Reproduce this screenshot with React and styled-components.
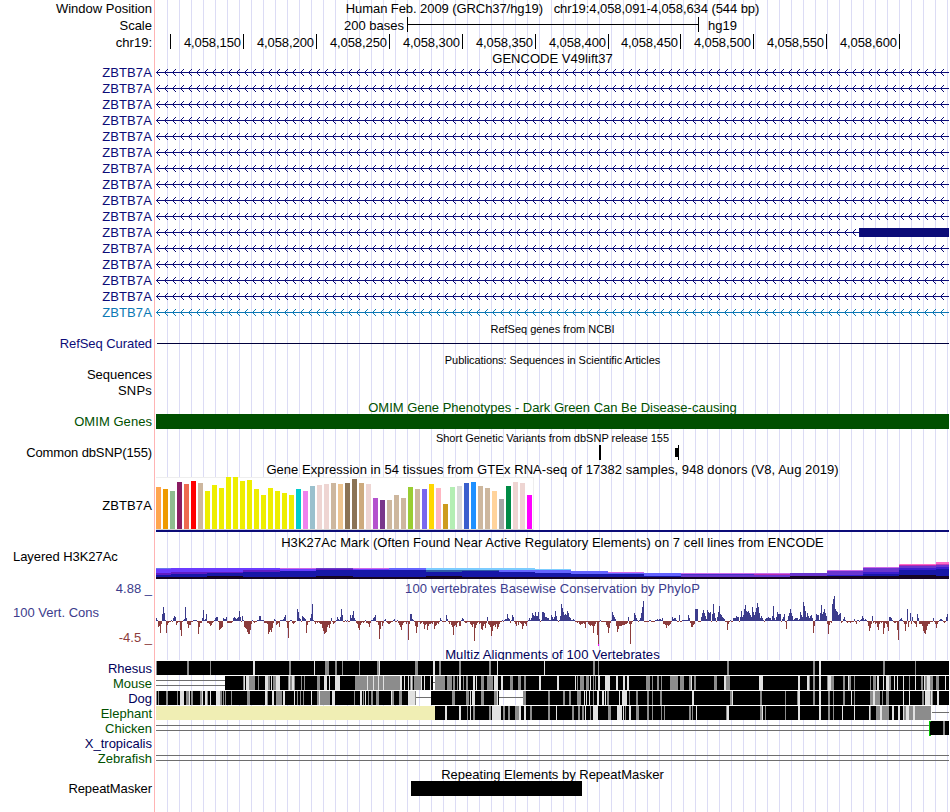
import React from "react";
import styled, { createGlobalStyle } from "styled-components";

const NAVY = "#0c0c78";
const GREEN = "#005000";
const PHYLO = "#3c3c8c";
const MAROON = "#8c3c3c";
const MULTIZ = "#00005a";
const LEFT = 156;
const WIDTH = 793;

const GlobalStyle = createGlobalStyle`
  body { margin: 0; background: #fff; }
`;

const Browser = styled.main`
  width: 949px;
  height: 812px;
  overflow: hidden;
  display: flex;
  flex-direction: column;
  font: 13px/18px "Liberation Sans", Arial, sans-serif;
  color: #000;
  background:
    linear-gradient(#ffb4b4, #ffb4b4) 154px 0 / 1px 100% no-repeat,
    repeating-linear-gradient(90deg, #dcdcf5 0 1px, transparent 1px 12px) 167px 0 / 782px 100% no-repeat;
`;

const Track = styled.section`
  flex: none;
  display: grid;
  grid-template-columns: 156px 793px;
  height: ${(p) => p.$h}px;
`;

const Label = styled.div`
  padding-right: 4px;
  text-align: ${(p) => (p.$left ? "left" : "right")};
  padding-left: ${(p) => (p.$left ? 13 : 0)}px;
  padding-top: ${(p) => p.$top || 0}px;
  line-height: ${(p) => p.$line || 18}px;
  letter-spacing: ${(p) => p.$ls || 0}px;
  color: ${(p) => p.$color || "#000"};
  white-space: nowrap;
`;

const Title = styled.div`
  flex: none;
  box-sizing: border-box;
  height: ${(p) => p.$h || 16}px;
  margin-left: ${(p) => (p.$nested ? 0 : 156)}px;
  padding-top: ${(p) => p.$top || 0}px;
  text-align: center;
  font-size: ${(p) => (p.$small ? 11 : 13)}px;
  line-height: ${(p) => p.$line || (p.$small ? 16 : 18)}px;
  letter-spacing: ${(p) => p.$ls || 0}px;
  color: ${(p) => p.$color || "#000"};
  white-space: pre;
`;

const Plot = styled.svg`
  display: block;
  overflow: visible;
  shape-rendering: crispEdges;
`;

const ScaleRow = styled.div`
  display: flex;
  align-items: flex-start;
  padding-left: 188px;
  line-height: 17px;
`;

const ScaleBar = styled.div`
  box-sizing: border-box;
  width: 292px;
  height: 15px;
  margin: 0 9px 0 auto;
  border: solid #000;
  border-width: 0 1px;
  background: linear-gradient(#000, #000) 0 7px / 100% 1px no-repeat;
`;

const ScaleLength = styled.span`
  width: 63px;
`;

const Assembly = styled.span`
  width: 241px;
`;

const Ruler = styled.div`
  display: flex;
`;

const RulerCell = styled.div`
  box-sizing: border-box;
  flex: none;
  width: ${(p) => p.$w}px;
  height: 15px;
  padding-right: 2px;
  border-right: 1px solid #000;
  text-align: right;
  letter-spacing: -0.08px;
`;

const SolidBar = styled.div`
  height: 15px;
  width: ${(p) => p.$w}px;
  margin-left: ${(p) => p.$x || 0}px;
  background: ${(p) => p.$color};
`;

const ConservationLabels = styled.div`
  display: flex;
  flex-direction: column;
  padding-right: 4px;
  color: ${PHYLO};
`;

const Bound = styled.span`
  text-align: right;
  color: ${(p) => p.$color || PHYLO};
`;

const Name = styled.span`
  padding: 6px 0 7px 13px;
`;

function chevrons(y) {
  let d = "";
  for (let x = 0; x < WIDTH - 3; x += 8) {
    for (let i = 1; i < 4; i++) {
      d += `M${x + i} ${y - i}h1v1h-1zM${x + i} ${y + i}h1v1h-1z`;
    }
  }
  return d;
}
const ARROWS = chevrons(8);

function GeneTrack({ color = NAVY, exon }) {
  return (
    <Track $h={16}>
      <Label $color={color} $ls={0.12}>ZBTB7A</Label>
      <Plot width={WIDTH} height={16} fill={color}>
        <rect y={8} width={WIDTH} height={1} />
        <path d={ARROWS} />
        {exon && <rect x={exon - LEFT} y={4} width={949 - exon} height={9} />}
      </Plot>
    </Track>
  );
}

const Y = "#eeee00";
const TAN = "#cdb79e";
const PINK = "#eed5d2";
const TISSUES = [
  [42, "#ffa54f"], [40, "#ee9a00"], [38, "#8fbc8f"], [47, "#8b1c62"], [45, "#ee6a50"], [48, "#ff0000"], [46, TAN],
  [38, Y], [44, Y], [41, Y], [52, Y], [52, Y], [48, Y], [49, Y], [40, Y], [34, Y], [41, Y], [38, Y], [36, Y], [34, Y],
  [40, "#00cdcd"], [38, "#ee82ee"], [43, "#9ac0cd"], [44, PINK], [45, PINK], [46, TAN], [45, "#eec591"],
  [46, "#8b7355"], [50, "#8b7355"], [46, "#cdaa7d"], [45, PINK], [31, "#b452cd"], [29, "#7a378b"], [29, TAN],
  [34, TAN], [31, TAN], [42, "#9acd32"], [40, TAN], [40, "#7a67ee"], [45, "#ffd700"], [41, "#ffb6c1"],
  [25, "#cd9b1d"], [42, "#b4eeb4"], [43, "#d9d9d9"], [46, "#3a5fcd"], [47, "#1e90ff"], [43, TAN], [41, TAN],
  [38, "#ffd39b"], [30, "#a6a6a6"], [43, "#008b45"], [47, PINK], [46, PINK], [34, "#ff00ff"],
];

function Expression() {
  return (
    <Plot width={WIDTH} height={57}>
      <rect width={378} height={53} fill="#eee" />
      <rect y={1} width={377} height={51} fill="#fff" />
      <rect y={52} width={377} height={1} fill="#d3d3d3" />
      {TISSUES.map(([h, c], i) => (
        <rect key={i} x={i * 7} y={52 - h} width={5} height={h} fill={c} />
      ))}
      <rect y={53} width={WIDTH} height={2} fill={NAVY} />
    </Plot>
  );
}

const V = "#6b3bff", P = "#5f1cc4", N = "#1717a8", K = "#150523", B = "#6464ff", C = "#7cccff";
const T = "#2e5ca8", M = "#cc6ae8", D = "#6a35d0", H = "#ff6ac8";

// Each column: left edge, then [top, colour] of every band down to the base line.
const H3K27AC = [
  [156, [568, "#6c74ee"], [569, V], [573, P], [575, N], [577, K]],
  [171, [568, V], [572, P], [574, N], [577, K]],
  [207, [568, V], [572, P], [573, N], [576, K]],
  [243, [568, V], [570, P], [572, N], [577, K]],
  [280, [568, M], [569, V], [571, N], [577, K]],
  [316, [568, "#6a3bc8"], [569, P], [570, N], [576, K]],
  [353, [568, M], [569, V], [570, N], [577, K]],
  [389, [568, B], [570, N], [577, K]],
  [426, [568, C], [570, T], [572, N], [576, K]],
  [462, [568, C], [570, T], [571, N], [577, K]],
  [499, [568, C], [570, B], [572, N], [577, K]],
  [535, [569, C], [570, B], [573, N], [577, K]],
  [571, [571, B], [574, N], [577, K]],
  [608, [572, M], [573, B], [574, N], [577, K]],
  [644, [573, B], [576, N], [577, K]],
  [681, [573, M], [574, "#4b30c8"], [575, D], [577, K]],
  [754, [573, M], [574, "#b52bb0"], [575, D], [577, K]],
  [790, [573, D], [576, K]],
  [827, [570, M], [571, D], [575, "#3020d0"], [576, K]],
  [863, [567, M], [568, D], [572, "#3b1ed0"], [574, N], [576, K]],
  [899, [564, H], [565, "#b52bb0"], [566, D], [568, "#3b1ed0"], [570, N], [575, K]],
  [936, [562, H], [564, "#c53cb8"], [565, D], [567, "#3b1ed0"], [569, N], [576, K]],
];

function Acetylation() {
  return (
    <Plot width={WIDTH} height={30}>
      {H3K27AC.map(([x, ...bands], i) => {
        const end = i + 1 < H3K27AC.length ? H3K27AC[i + 1][0] : 949;
        return bands.map(([y, c]) => (
          <rect key={`${x}-${y}`} x={x - LEFT} y={y - 550} width={end - x} height={579 - y} fill={c} />
        ));
      })}
    </Plot>
  );
}

// PhyloP scores, one per pixel column, in pixels above or below the zero line.
const SCORES = {
  156: "3 1 -6 -5 -12 -3 7 14 8 1 -12 -4 -2 -1 -1 1 -1",
  173: "3 5 4 -4 -2 -1 -1 -9 -15 -1 1 2 14 3 -3 -7 -4 -4 -1 -1",
  193: "1 1 1 1 -1 -13 -6 -2 -2 3 11 1 2 7 -2 -2 -3 -5 -4 -2 -1",
  214: "1 3 4 4 -1 -9 -8 -7 -6 3 2 2 4 -2 -2 -2 -2 -2 -1",
  233: "3 4 3 2 3 4 10 4 -1 5 1 -6 -7 -8 -11 -13 -13 -9 -3",
  252: "1 -1 -2 -1 -1 1 1 5 5 1 1 1 -2 -2 -2 -3 -13 -11 -9 -11 -7 -2",
  274: "2 1 -4 -3 -2 -6 1 1 1 2 4 6 -1 -7 -17 -1 1 1 -2 -3 -2 -1",
  297: "12 9 3 2 -1 5 4 3 2 -12 -4 -1 -1 3 7 17 1 -1 -3 -1",
  317: "-2 -1 -2 -3 -3 -7 -10 -13 -12 -11 -6 -4 -7 -3 3 -1 -3 -2 -1",
  336: "1 4 2 1 4 12 6 -1 -1 1 -1 1 -1 -1 6 3 6 10 3 1",
  356: "-2 -3 -7 -9 -4 -2 -1 -2 -1 1 -2 -2 -3 -6 -2 1 1 3 4 6",
  376: "-1 -1 -4 -18 -8 -1 -5 -2 1 2 -1 -2 -3 -3 -2 -1 -1 1 2 -1",
  396: "-1 1 -2 -4 -6 -9 -4 -2 -1 -1 -3 -1 -19 -3",
  410: "7 7 2 1 -1 -5 -12 -6 -1 -1 -3 -2 -1 -3 -8 -4 -3 -9 -5 -3",
  430: "-3 -2 -3 -1 -8 -5 -4 -2 -3 -1 3 1 -1 -1 -1 -1",
  446: "6 2 -1 -3 -1 -4 -6 -14 -5 -4 -6 -2 -1 -5 -5 1 3 2 -1",
  465: "-2 -2 -1 -1 -1 -3 -4 -6 -3 -20 -7 -4 -2 -1 -3 -2 -8 -9 -5 -3 -7 -2",
  487: "4 -3 -4 -6 -15 -10 -5 -4 -6 -3 -8 -6 -3 -1 -1",
  502: "1 -1 1 2 2 7 3 2 -2 1 6 4 -1 -3 -5 -1 -4 -1 -2 -3 -8 -5 -2 -3 -5 -1",
  528: "1 3 1 3 8 6 5 9 5 5 9 2 -1 1 9 9 8 4 4 3 3 1",
  550: "1 6 4 2 4 10 5 1 -1 1 5 17 13 9 6 7 6 10 8 4 3 1 1 2 1 -1 -1",
  577: "-2 -1 -3 -4 -3 -3 -2 -3 -7 -1 -1 -3 -4 -5 -4 -5 -12 -5 -3 -1",
  597: "-14 -25 -1 1 -1 -1 -1 -1 -1 -4 -6 -12 -7 -2 1 9 6 4 2 -5 -11 -8 -5 -5 -5 -4",
  623: "-4 -4 -3 -3 -2 4 -3 -23 -3 -1 1 8 6 3 1 -1 1 3 8 14 20",
  644: "-1 -1 -1 -1 -1 1 1 -1 -1 -1 -1 1 1 2 1 2 2 1 3 -3 -3 -4 -7 -4 -5 -4 -3 -1 4 2 3 3 1 -1 -1 6",
  680: "-1 -1 1 1 1 1 1 1 6 3 -2 -6 -6 -4 -3 12 12 12 -1 -1",
  700: "-1 4 8 11 8 5 2 11 9 8 9 -1 7 17 8 3 -1 4 9 15 7 6 4 3 2 -1 -1 -9 -3 -1",
  730: "1 -1 -1 3 3 3 5 4 4 -1 4 10 4 6 12 16 10 9 10 8 6 4 14 9 6 9 13 18 14 8",
  760: "3 5 3 1 -1 2 3 3 4 3 3 1 5 15 3 1 4 9 7 7 7 -1 2 4 7 -1 -8",
  787: "1 5 8 12 8 5 1 2 3 3 3 1 2 9 6 4 19 15 10 4 8 5 3 5 6 3 -12 -5 1",
  816: "7 6 6 1 8 16 7 9 12 8 5 -3 -13 -4 -1 -2 17 22 25 12 10 9 6 7 8 -2 -1",
  843: "2 4 1 -1 -2 -1 -1 -2 -1 -1 -1 2 -1 -3 1 1 -1 1 2 5 3 1 2 1 -1 -5 -10 -7 -3 5",
  873: "-2 -1 -3 -2 -6 -9 -3 -1 -2 -1 -13 -7 -2 -3 -6 -10 4 4 3 1 -1 -2 -2 -1 -9 -19",
  899: "1 2 3 1 -1 -3 -10 -3 12 -6 -1 8 -3 4 -1 -2 -3 -6 7 3 -3 -3 -3 -5 -10 -12 -13 -9 -5 -3",
  929: "-3 -1 -1 -1 3 -1 -3 -7 -3 -1 1 2 2 1 -1 -2 -1 4 7",
};

const scorePath = (sign) =>
  Object.entries(SCORES)
    .flatMap(([start, run]) => run.split(" ").map((s, i) => [Number(start) + i, Number(s)]))
    .map(([x, s]) => (s * sign > 0 ? `M${x - LEFT} 25h1v${s > 0 ? -s : -s}h-1z` : ""))
    .join("");

const UP = scorePath(1);
const DOWN = scorePath(-1);

function Conservation() {
  return (
    <Plot width={WIDTH} height={50}>
      <path d={UP} fill={PHYLO} />
      <path d={DOWN} fill={MAROON} />
      <rect x={442} y={48} width={1} height={2} fill="#f0f" />
    </Plot>
  );
}

// Runs are written as x:width; gray marks a partial match, light a weak one.
const ALIGNMENTS = [
  {
    name: "Rhesus", color: MULTIZ, blocks: "156:793",
    gray: "156:1 187:2 210:1 289:2 325:4 335:2 342:1 359:1 377:2 415:3 439:2 459:2 489:2 593:2 598:1 727:2 813:2 883:2 915:1",
    light: "253:2 314:1 379:1 433:2 497:1 544:1 819:2",
  },
  {
    name: "Mouse", color: GREEN, blocks: "225:208 435:514", doubles: "156:69", links: "433:2",
    gray: "243:1 249:6 258:1 268:2 273:3 288:1 290:2 294:1 301:1 304:1 317:3 355:45 410:3 414:7 435:10 447:5 453:2 457:1 463:1 466:2 481:3 487:6 510:3 518:3 524:2 577:1 580:4 586:3 593:1 595:1 646:4 652:1 657:2 661:1 670:8 680:4 689:2 694:2 714:3 726:4 809:1 813:2 827:2 831:3 843:2 849:2 854:1 870:1 873:3 889:2 909:1 921:2 925:2 930:3 936:3",
    light: "244:1 246:3 265:3 271:1 276:3 279:1 289:1 292:2 324:3 329:1 335:5 367:1 373:1 378:1 383:1 400:2 404:1 408:1 411:1 421:1 424:1 430:1 459:2 473:2 476:1 494:4 501:2 539:2 557:2 575:1 590:1 598:2 605:5 616:2 623:2 627:2 691:1 724:2 759:4 798:2 807:2 819:2 828:3 848:1 877:2 883:1 886:3 894:1 897:1 903:1 915:1 924:1 927:3 945:1",
  },
  {
    name: "Dog", color: MULTIZ, blocks: "156:260 431:68 523:426", links: "416:15 499:24",
    gray: "156:1 158:1 166:2 177:1 186:3 191:2 200:2 207:1 220:2 223:1 225:1 231:1 247:3 267:1 276:6 297:1 300:1 303:1 317:7 324:6 354:1 363:1 368:1 371:2 376:3 392:2 399:3 415:1 452:3 466:3 481:3 494:3 523:3 548:2 563:2 569:2 577:4 593:1 607:2 629:1 636:2 647:2 652:1 660:2 730:2 760:2 785:1 797:1 813:2 828:2 833:1 843:2 854:1 870:10 882:1 886:3 922:2 930:3",
    light: "180:4 189:1 202:1 205:2 210:1 216:4 265:2 272:2 283:2 294:1 311:1 319:1 332:3 360:2 365:1 391:1 408:7 470:1 472:3 497:1 584:1 586:1 589:1 597:2 602:2 605:1 619:1 622:5 692:2 732:1 798:2 819:2 851:1 873:2 903:1 909:1 925:5 931:1 937:2",
  },
  {
    name: "Elephant", color: GREEN, blocks: "435:496", gap: "156:279", links: "932:17",
    gray: "467:1 473:2 489:2 503:2 508:2 515:4 530:2 548:2 572:2 578:2 582:2 590:1 608:3 625:1 636:3 647:2 652:1 661:1 664:1 689:2 692:1 726:1 760:2 765:1 785:1 828:2 833:1 870:1 876:13 904:27",
    light: "445:2 459:2 470:1 492:9 519:2 524:2 556:1 585:1 593:5 617:5 623:1 629:2 696:1 727:2 762:1 798:2 819:2 842:1 854:1 869:1 880:2 892:2 898:2 903:1 906:3 913:2",
  },
  { name: "Chicken", color: GREEN, blocks: "930:19", doubles: "156:773", gray: "943:2", breakAt: 929 },
  { name: "X_tropicalis", color: MULTIZ },
  { name: "Zebrafish", color: GREEN, doubles: "156:793" },
];

function Bands({ runs = "", y = 1, h = 14, fill }) {
  const d = runs
    .split(" ")
    .filter(Boolean)
    .map((r) => {
      const [x, w] = r.split(":").map(Number);
      return `M${x - LEFT} ${y}h${w}v${h}h${-w}z`;
    })
    .join("");
  return <path d={d} fill={fill} />;
}

function AlignmentTrack({ row }) {
  return (
    <Track $h={15}>
      <Label $color={row.color}>{row.name}</Label>
      <Plot width={WIDTH} height={15}>
        <Bands runs={row.blocks} y={0} h={1} fill="#fff" />
        <Bands runs={row.doubles} y={5} h={1} fill="#6e6e6e" />
        <Bands runs={row.doubles} y={10} h={1} fill="#6e6e6e" />
        <Bands runs={row.links} y={7} h={1} fill="#6e6e6e" />
        <Bands runs={row.gap} fill="#f0eeb4" />
        <Bands runs={row.blocks} fill="#000" />
        <Bands runs={row.gray} fill="#8c8c8c" />
        <Bands runs={row.light} fill="#e1e1e1" />
        {row.breakAt && <path d={`M${row.breakAt - LEFT} 1h2v1h-1v13h1v1h-2z`} fill="#00c800" />}
      </Plot>
    </Track>
  );
}

const TICKS = [
  [15, ""], [73, "4,058,150"], [73, "4,058,200"], [73, "4,058,250"], [73, "4,058,300"], [73, "4,058,350"],
  [73, "4,058,400"], [72, "4,058,450"], [73, "4,058,500"], [73, "4,058,550"], [73, "4,058,600"],
];

export default function App() {
  return (
    <>
      <GlobalStyle />
      <Browser>
        <Track $h={17}>
          <Label>Window Position</Label>
          <Title $nested $line={17} $ls={-0.075}>{"Human Feb. 2009 (GRCh37/hg19)   chr19:4,058,091-4,058,634 (544 bp)"}</Title>
        </Track>
        <Track $h={17}>
          <Label>Scale</Label>
          <ScaleRow>
            <ScaleLength>200 bases</ScaleLength>
            <ScaleBar />
            <Assembly>hg19</Assembly>
          </ScaleRow>
        </Track>
        <Track $h={16}>
          <Label>chr19:</Label>
          <Ruler>
            {TICKS.map(([w, t]) => (
              <RulerCell key={t} $w={w}>{t}</RulerCell>
            ))}
          </Ruler>
        </Track>

        <Title $h={14} $ls={0.03}>GENCODE V49lift37</Title>
        {Array.from({ length: 16 }, (_, i) => (
          <GeneTrack key={i} color={i === 15 ? "#0c78b4" : NAVY} exon={i === 10 ? 859 : undefined} />
        ))}

        <Title $small $h={15} $top={1}>RefSeq genes from NCBI</Title>
        <Track $h={15}>
          <Label $color={NAVY} $ls={-0.07}>RefSeq Curated</Label>
          <Plot width={WIDTH} height={15}>
            <rect x={1} y={8} width={WIDTH - 1} height={1} fill="#00003c" />
          </Plot>
        </Track>

        <Title $small $top={2} $ls={-0.05}>Publications: Sequences in Scientific Articles</Title>
        <Track $h={16}><Label>Sequences</Label></Track>
        <Track $h={16}><Label $ls={0.2}>SNPs</Label></Track>

        <Title $top={1} $color={GREEN}>OMIM Gene Phenotypes - Dark Green Can Be Disease-causing</Title>
        <Track $h={15}>
          <Label $line={16} $color={GREEN} $ls={0.05}>OMIM Genes</Label>
          <SolidBar $w={WIDTH} $color={GREEN} />
        </Track>

        <Title $small $h={15} $top={1}>Short Genetic Variants from dbSNP release 155</Title>
        <Track $h={16}>
          <Label $ls={-0.12}>Common dbSNP(155)</Label>
          <Plot width={WIDTH} height={16}>
            <rect x={443} y={1} width={2} height={15} />
            <rect x={519} y={4} width={3} height={9} />
            <rect x={522} y={1} width={1} height={15} />
          </Plot>
        </Track>

        <Title $h={17} $top={1} $ls={0.055}>Gene Expression in 54 tissues from GTEx RNA-seq of 17382 samples, 948 donors (V8, Aug 2019)</Title>
        <Track $h={57}>
          <Label $top={20} $ls={0.12}>ZBTB7A</Label>
          <Expression />
        </Track>

        <Track $h={46}>
          <Label $left $top={14} $ls={-0.05}>Layered H3K27Ac</Label>
          <div>
            <Title $nested $ls={0.06}>H3K27Ac Mark (Often Found Near Active Regulatory Elements) on 7 cell lines from ENCODE</Title>
            <Acetylation />
          </div>
        </Track>

        <Track $h={66}>
          <ConservationLabels>
            <Bound>4.88 _</Bound>
            <Name>100 Vert. Cons</Name>
            <Bound $color={MAROON}>-4.5 _</Bound>
          </ConservationLabels>
          <div>
            <Title $nested $color={PHYLO} $ls={0.06}>100 vertebrates Basewise Conservation by PhyloP</Title>
            <Conservation />
          </div>
        </Track>

        <Title $h={14} $color={MULTIZ} $ls={0.1}>Multiz Alignments of 100 Vertebrates</Title>
        {ALIGNMENTS.map((row) => (
          <AlignmentTrack key={row.name} row={row} />
        ))}

        <Title $top={1}>Repeating Elements by RepeatMasker</Title>
        <Track $h={31}>
          <Label $line={16} $ls={-0.08}>RepeatMasker</Label>
          <SolidBar $x={255} $w={171} $color="#000" />
        </Track>
      </Browser>
    </>
  );
}
